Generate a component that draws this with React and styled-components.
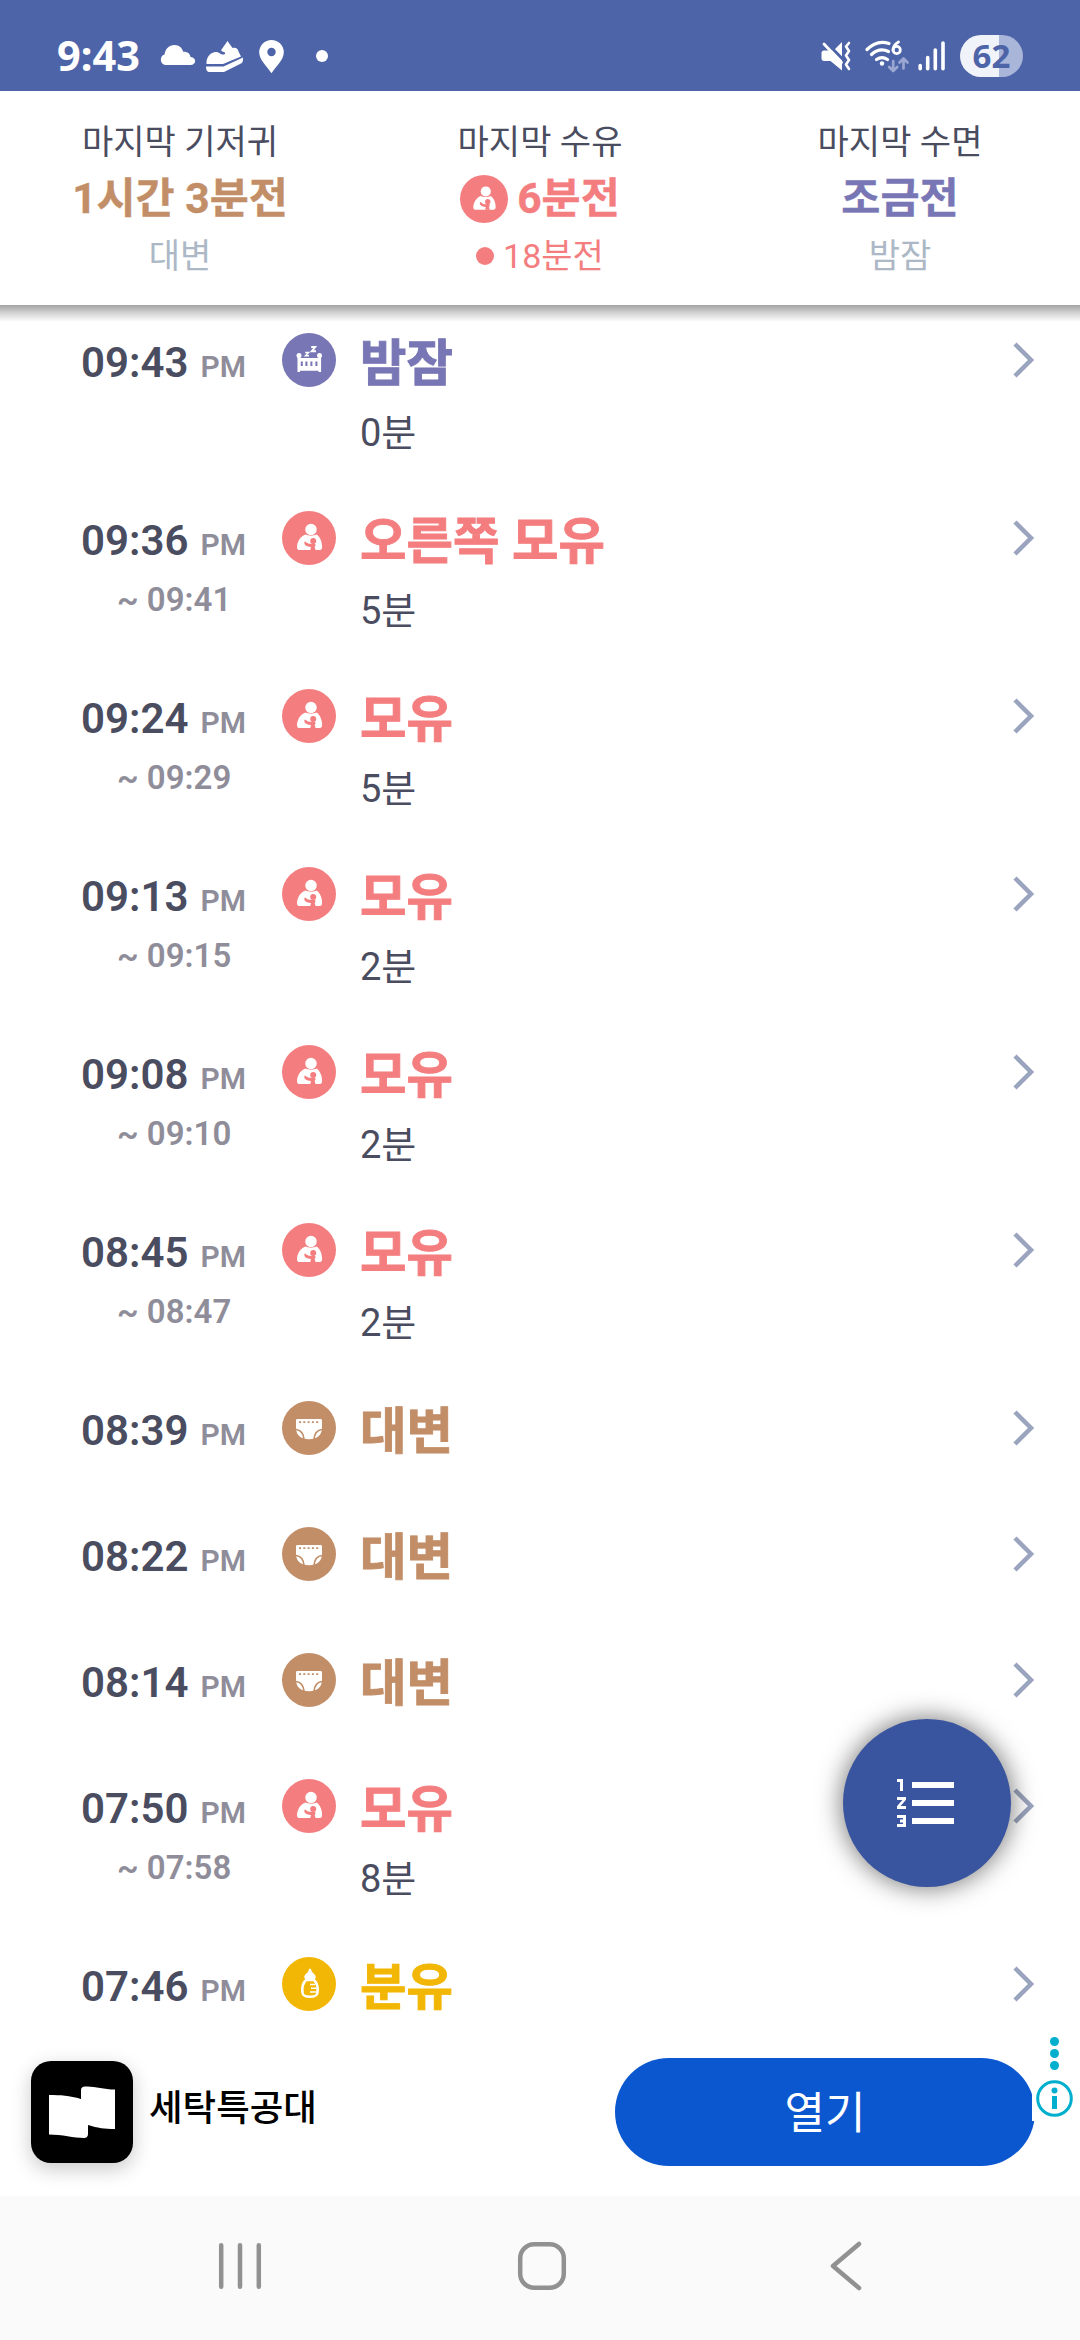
import React from 'react';
import styled, { createGlobalStyle } from 'styled-components';
import { MdFormatListNumbered } from 'react-icons/md';

const colors = {
  white: '#ffffff',
  status: '#4d64a8',
  fab: '#3a559f',
  text: '#4a4c60',
  muted: '#8f8d99',
  pale: '#adb8c6',
  chevron: '#9ba4be',
  sleep: '#7876b4',
  feed: '#f47e7f',
  diaper: '#c28e68',
  bottle: '#f2b604',
  ad: '#00aecd',
  button: '#0b57d0',
  nav: '#919191',
};

const records = [
  { time: '09:43', type: 'sleep', title: '밤잠', detail: '0분' },
  { time: '09:36', end: '09:41', type: 'feed', title: '오른쪽 모유', detail: '5분' },
  { time: '09:24', end: '09:29', type: 'feed', title: '모유', detail: '5분' },
  { time: '09:13', end: '09:15', type: 'feed', title: '모유', detail: '2분' },
  { time: '09:08', end: '09:10', type: 'feed', title: '모유', detail: '2분' },
  { time: '08:45', end: '08:47', type: 'feed', title: '모유', detail: '2분' },
  { time: '08:39', type: 'diaper', title: '대변' },
  { time: '08:22', type: 'diaper', title: '대변' },
  { time: '08:14', type: 'diaper', title: '대변' },
  { time: '07:50', end: '07:58', type: 'feed', title: '모유', detail: '8분' },
  { time: '07:46', type: 'bottle', title: '분유' },
];

// glyphs share a 54x54 box, the round background comes from Badge
const glyphs = {
  sleep: (
    <>
      <circle cx="17" cy="22.500" r="2.500" fill="#fff" />
      <circle cx="37.500" cy="22.500" r="2.500" fill="#fff" />
      <path fill="#fff" d="M15.500 22.500h2.800V25h18v-2.500h2.800V39h-2.600v-1.200H18V39h-2.500z" />
      <path fill={colors.sleep} d="M18.800 28.500h2v4.500h-2zM23.400 28.500h2v4.500h-2zM28.400 28.500h2v4.500h-2zM33.400 28.500h2v4.500h-2z" />
      <path fill="none" stroke="#fff" strokeWidth="1.500" d="M23.200 19.500h3.300l-3 3.200H27" />
      <path fill="none" stroke="#fff" strokeWidth="1.900" d="M29.200 14h4l-3.500 4.300h4.300" />
    </>
  ),
  feed: (
    <>
      <circle cx="29" cy="18.500" r="5.700" fill="#fff" />
      <path fill="#fff" d="M23.500 23.500c3 1.500 8 1.500 11 0 4 2.500 5.800 8.500 5.600 13-.1 1.800-1.500 2.600-3 2.600H18c-1.800 0-3-.9-3-2.600 0-4.500 2.500-11 8.500-13z" />
      <circle cx="31.200" cy="30" r="3" fill={colors.feed} />
      <path fill={colors.feed} d="M22.800 30.500c1.600.3 2.400 2 4.200 2.300 2.500.3 4.500-.6 6 .2.900.9.700 2-.4 2.800l1 3.400h-5.400l.8-3.200c-2.500-.3-5.600-1-6.400-2.800-.4-1-.3-2.200.2-2.700z" />
    </>
  ),
  diaper: (
    <>
      <path fill="#fff" d="M15.500 18h23c1 0 1.500.5 1.500 1.500v8c-.3 5-3 8.500-6.500 9.500-4.500 1.700-8.500 1.700-13 0-3.500-1-6.200-4.500-6.500-9.500v-8c0-1 .5-1.500 1.500-1.500z" />
      <path fill="none" stroke={colors.diaper} strokeWidth="1.600" d="M14 28.500c5 .5 7.500 4 8 10M40 28.500c-5 .5-7.500 4-8 10" />
      <path fill="none" stroke={colors.diaper} strokeWidth="1.800" strokeDasharray="2 2.300" d="M17 21.200h20.500" />
    </>
  ),
  bottle: (
    <>
      <path fill="#fff" d="M28 11.500c1.500.5 1.500 2 2 3.500 1.500 1 3.600 3 3.800 5 0 1.500-1.500 1.500-1.500 2.500h-8.600c0-1-1.500-1-1.500-2.500.2-2 2.300-4 3.800-5 .5-1.500.5-3 2-3.500z" />
      <path fill="none" stroke="#fff" strokeWidth="2.600" d="M24 23c-3 3-4.200 7.500-3.500 12.500.3 3.500 2.500 4.300 7.500 4.300s7.200-.8 7.500-4.300c.7-5-.5-9.500-3.500-12.500z" />
      <path fill="none" stroke="#fff" strokeWidth="1.500" d="M28 27.500h5M29 31.300h5.500M28 35h6.500" />
    </>
  ),
};

const RecordIcon = ({ type, size = 54 }) => (
  <Badge $type={type} $size={size}>
    <svg viewBox="0 0 54 54" width={size} height={size}>{glyphs[type]}</svg>
  </Badge>
);

const StatusIcons = () => (
  <svg width="180" height="50" viewBox="155 31 180 50" fill="#fff">
    <path d="M165 65a5.500 5.500 0 0 1-.5-10.500c.8-5.500 4.500-9.500 10-9.500 4.500 0 7.500 2.800 8.700 6.700 4.500-.2 7 2 7.300 5.300 6.500.5 6 8 0 8z" />
    <path d="M206.500 64c-.5-7 4-12 9.500-12 3.500 0 4.500 3 8 2.500 1.500-.5 1.500-2 0-2.500-1.500-.3-2.500-1-3-1.700l6.500-9.300 5 7c3-1 5.500.5 6 3.500l2.500 5L223 64z" />
    <path d="M206 66.500h17.500L243 57.500c.3 4-.5 5.500-3 6.500L224 72h-14c-3 0-4-2-4-5.500z" />
    <path fillRule="evenodd" d="M271.500 40a12.300 12.300 0 0 1 12.300 12.300c0 8-7.300 13-12.300 21-5-8-12.300-13-12.300-21a12.300 12.300 0 0 1 12.300-12.300zm0 7.800a4.200 4.200 0 1 0 0 8.400 4.200 4.200 0 0 0 0-8.400z" />
    <circle cx="322" cy="56" r="6" />
  </svg>
);

const SignalIcons = () => (
  <svg width="130" height="50" viewBox="818 31 130 50" fill="none" stroke="#fff">
    <path fill="#fff" stroke="none" d="M824 50.500h4l7-1.500 7-7v28.500L830.500 61H824c-1.500 0-2.500-1-2.500-2.500V53c0-1.500 1-2.500 2.500-2.500z" />
    <path stroke={colors.status} strokeWidth="3" d="M827 43l17 17.500" />
    <path strokeWidth="2.800" strokeLinecap="round" d="M824 44l17.500 18.500" />
    <path strokeWidth="2.600" strokeLinecap="round" strokeLinejoin="round" d="M849 43l-3 3.500 3 4.500-3 4.500 3 4.500-3 4.500 3 4.500" />
    <path strokeWidth="3.200" strokeLinecap="round" d="M867 49.500c7-7 15-8.500 22-6M871.500 54.500c5.500-5 12-5.500 17-3M876.500 59.500c3.500-2.500 7.500-2.500 11 0" />
    <circle cx="882" cy="63.500" r="2.200" fill="#fff" stroke="none" />
    <path strokeWidth="2.800" strokeLinecap="round" d="M898.500 42c-3.500 2-5.500 5-5.500 8.500" />
    <circle cx="896.700" cy="50" r="3.600" strokeWidth="2.800" />
    <path stroke="#9ba7d0" strokeWidth="2.700" strokeLinecap="round" strokeLinejoin="round" d="M893.200 61v10m-4-4l4 4 4-4M903.500 68.500V58.500m-4 4l4-4 4 4" />
    <path strokeWidth="3.600" strokeLinecap="round" d="M920.200 65.500v3.200M927.700 57.500v11.200M935.300 50v18.700M943 43v25.700" />
  </svg>
);

const Chevron = () => (
  <svg width="24" height="36" viewBox="0 0 24 36">
    <path fill="none" stroke={colors.chevron} strokeWidth="4.500" d="M3 2l16 16L3 34" />
  </svg>
);

const Record = ({ time, end, type, title, detail }) => (
  <Row $tall={Boolean(detail)}>
    <Times>
      <Start>{time}<small>PM</small></Start>
      {end && <End>~ {end}</End>}
    </Times>
    <RecordIcon type={type} />
    <Body>
      <Title $type={type}>{title}</Title>
      {detail && <Detail>{detail}</Detail>}
    </Body>
    <Chevron />
  </Row>
);

const App = () => (
  <Screen>
    <GlobalStyle />
    <StatusBar>
      <Clock>9:43</Clock>
      <StatusIcons />
      <Spacer />
      <SignalIcons />
      <Battery>62</Battery>
    </StatusBar>
    <Summary>
      <SummaryItem>
        <Label>마지막 기저귀</Label>
        <Value $type="diaper">1시간 3분전</Value>
        <Note>대변</Note>
      </SummaryItem>
      <SummaryItem>
        <Label>마지막 수유</Label>
        <Value $type="feed"><RecordIcon type="feed" size={48} />6분전</Value>
        <Note $active><Dot />18분전</Note>
      </SummaryItem>
      <SummaryItem>
        <Label>마지막 수면</Label>
        <Value $type="sleep">조금전</Value>
        <Note>밤잠</Note>
      </SummaryItem>
    </Summary>
    <List>
      {records.map(record => <Record key={record.time} {...record} />)}
    </List>
    <Fab><MdFormatListNumbered size={72} /></Fab>
    <Ad>
      <AdLogo>
        <svg width="102" height="102" viewBox="0 0 102 102">
          <path fill="#fff" d="M18 34c12 0 20 .5 32 4V29c0-2 1.500-3.500 4-3.500 10-.5 18 3 30 3V68c-11 0-17-1-27-4v9c0 2.500-1.500 4-4 4-10 0-22-3.500-35-3.500z" />
        </svg>
      </AdLogo>
      <AdName>세탁특공대</AdName>
      <AdButton>열기</AdButton>
      <AdChoices>
        <svg width="48" height="90" viewBox="0 0 48 90" fill={colors.ad}>
          <circle cx="22.500" cy="10.500" r="4.500" />
          <circle cx="22.500" cy="22.500" r="4.500" />
          <circle cx="22.500" cy="34.500" r="4.500" />
          <circle cx="22.500" cy="67.500" r="16.800" fill="none" stroke={colors.ad} strokeWidth="3" />
          <circle cx="22.500" cy="59.500" r="3" />
          <path d="M20 65h5v13h-5z" />
        </svg>
      </AdChoices>
    </Ad>
    <NavBar>
      <svg width="48" height="50" viewBox="0 0 48 50">
        <path d="M5.200 4.300v41.400M24 4.300v41.400M42.800 4.300v41.400" />
      </svg>
      <svg width="50" height="50" viewBox="0 0 50 50">
        <rect x="3.200" y="3.200" width="43.600" height="43.600" rx="14" />
      </svg>
      <svg width="43" height="50" viewBox="-9 0 43 50">
        <path d="M30 3L4 25l26 22" />
      </svg>
    </NavBar>
  </Screen>
);

export default App;

const GlobalStyle = createGlobalStyle`
  body {
    margin: 0;
    background: ${colors.white};
  }

  * {
    box-sizing: border-box;
  }

  svg {
    display: block;
    flex-shrink: 0;
  }
`;

const Screen = styled.div`
  position: relative;
  display: flex;
  flex-direction: column;
  width: 1080px;
  height: 2340px;
  overflow: hidden;
  background: ${colors.white};
  color: ${colors.text};
  font-family: Roboto, 'Noto Sans CJK KR', sans-serif;
`;

const StatusBar = styled.header`
  display: flex;
  align-items: center;
  height: 91px;
  padding: 21px 57px 0 57px;
  background: ${colors.status};
  color: ${colors.white};
`;

const Clock = styled.span`
  width: 98px;
  padding-bottom: 2px;
  font: 700 41.5px/48px 'Noto Sans', sans-serif;
`;

const Spacer = styled.div`
  flex: 1;
`;

const Battery = styled.span`
  width: 63px;
  height: 42px;
  margin-left: 12px;
  border-radius: 21px;
  background: linear-gradient(90deg, #f1f3fa 62%, #a9b5d9 62%);
  color: ${colors.status};
  font: 700 33px/42px 'Noto Sans', sans-serif;
  text-align: center;
`;

const Summary = styled.section`
  position: relative;
  z-index: 1;
  display: grid;
  grid-template-columns: repeat(3, 1fr);
  height: 214px;
  padding-top: 23px;
  background: ${colors.white};

  &::after {
    content: '';
    position: absolute;
    top: 100%;
    left: 0;
    right: 0;
    height: 17px;
    background: linear-gradient(rgba(0, 0, 0, 0.36), rgba(0, 0, 0, 0.16) 50%, rgba(0, 0, 0, 0));
  }
`;

const SummaryItem = styled.div`
  display: flex;
  flex-direction: column;
  align-items: center;
`;

const Label = styled.span`
  font-size: 34px;
  line-height: 56px;
`;

const Value = styled.strong`
  display: flex;
  align-items: center;
  gap: 9px;
  height: 58px;
  color: ${({ $type }) => colors[$type]};
  font-size: 42.5px;
  line-height: 58px;
  -webkit-text-stroke: 0.4px currentColor;
`;

const Note = styled.span`
  display: flex;
  align-items: center;
  gap: 9px;
  color: ${({ $active }) => ($active ? colors.feed : colors.pale)};
  font-size: 34px;
  line-height: 56px;
`;

const Dot = styled.i`
  width: 18px;
  height: 18px;
  border-radius: 50%;
  background: ${colors.feed};
`;

const Badge = styled.span`
  flex-shrink: 0;
  width: ${({ $size }) => $size}px;
  height: ${({ $size }) => $size}px;
  border-radius: 50%;
  background: ${({ $type }) => colors[$type]};
`;

const List = styled.main`
  flex: 1;
  min-height: 0;
  padding-top: 28px;
  overflow: hidden;
`;

const Row = styled.article`
  display: flex;
  align-items: flex-start;
  height: ${({ $tall }) => ($tall ? 178 : 126)}px;
  padding: 0 44px 0 81px;

  > svg {
    margin-top: 9px;
  }
`;

const Times = styled.div`
  width: 201px;
`;

const Start = styled.div`
  padding-top: 1px;
  font-size: 42px;
  font-weight: 600;
  line-height: 58px;

  small {
    margin-left: 12px;
    color: ${colors.muted};
    font-size: 30px;
  }
`;

const End = styled.div`
  padding: 4px 0 0 36px;
  color: ${colors.muted};
  font-size: 33px;
  font-weight: 600;
  line-height: 44px;
`;

const Body = styled.div`
  flex: 1;
  padding-left: 24px;
`;

const Title = styled.div`
  padding-top: 3px;
  color: ${({ $type }) => colors[$type]};
  font-size: 50.5px;
  font-weight: 700;
  line-height: 56px;
  -webkit-text-stroke: 0.9px currentColor;
`;

const Detail = styled.div`
  margin-top: 13px;
  font-size: 38px;
  line-height: 56px;
`;

const Fab = styled.button`
  position: absolute;
  top: 1719px;
  left: 843px;
  display: flex;
  align-items: center;
  justify-content: center;
  width: 168px;
  height: 168px;
  padding: 0;
  border: 0;
  border-radius: 50%;
  background: ${colors.fab};
  color: ${colors.white};
  box-shadow: 0 0 24px 2px rgba(0, 0, 0, 0.5);
`;

const Ad = styled.aside`
  position: relative;
  display: flex;
  align-items: center;
  height: 165px;
  padding: 0 45px 3px 31px;
  background: ${colors.white};
`;

const AdLogo = styled.div`
  border-radius: 20px;
  background: #000;
  box-shadow: 0 6px 20px rgba(0, 0, 0, 0.22);
`;

const AdName = styled.span`
  flex: 1;
  padding: 0 0 14px 16px;
  color: #000;
  font-size: 36.5px;
  font-weight: 500;
`;

const AdButton = styled.button`
  width: 420px;
  height: 108px;
  padding: 0 0 4px;
  border: 0;
  border-radius: 54px;
  background: ${colors.button};
  color: ${colors.white};
  font: 400 44px 'Noto Sans CJK KR', sans-serif;
`;

const AdChoices = styled.div`
  position: absolute;
  top: 0;
  right: 0;
  background: ${colors.white};
`;

const NavBar = styled.nav`
  display: flex;
  align-items: center;
  gap: 253px;
  height: 144px;
  padding: 0 0 4px 216px;
  background: #fafafa;

  svg {
    fill: none;
    stroke: ${colors.nav};
    stroke-width: 4.500;
    stroke-linecap: round;
    stroke-linejoin: round;
  }
`;
